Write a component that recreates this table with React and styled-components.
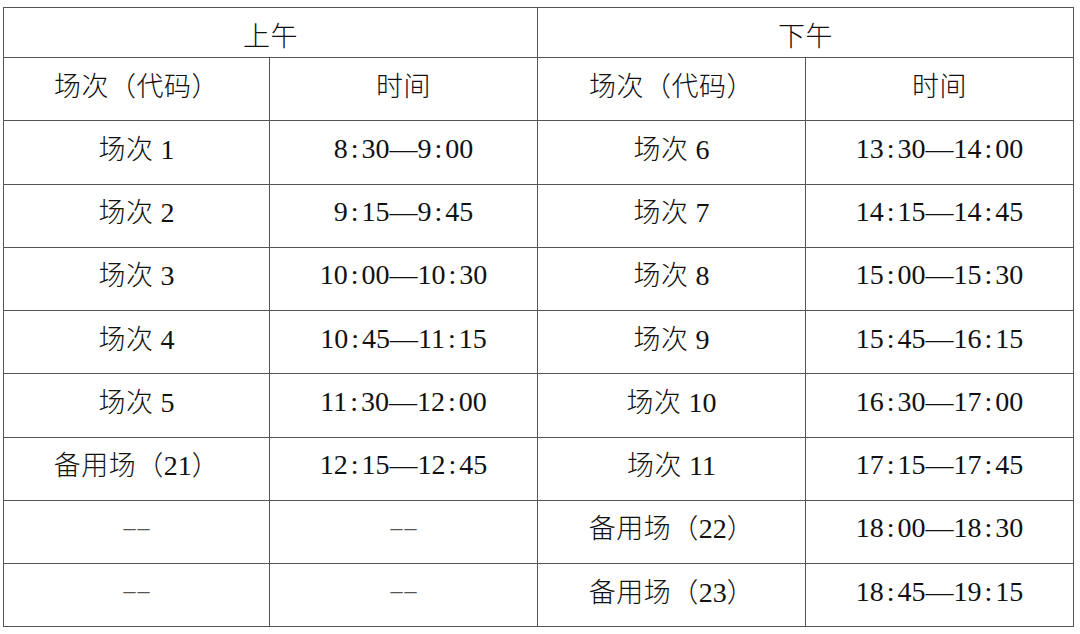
import React from 'react'
import styled, { createGlobalStyle } from 'styled-components'

const GlobalStyle = createGlobalStyle`
  html, body {
    margin: 0;
    padding: 0;
    background: #ffffff;
  }
  body {
    font-family: 'Liberation Serif', 'Noto Sans CJK SC', serif;
    color: #111111;
  }
`

const Page = styled.div`
  padding: 7px 0 0 3px;
`

const Table = styled.table`
  width: 1070px;
  border-collapse: collapse;
  table-layout: fixed;
  border: 1px solid #8a8a8a;
`

const Cell = styled.td`
  border: 1px solid #555555;
  height: ${p => (p.$head ? 50 : 63.25)}px;
  padding: 0;
  text-align: center;
  vertical-align: middle;
  font-size: 27px;
  line-height: 1;
  padding-top: ${p => (p.$head ? 7 : 0)}px;
  padding-bottom: ${p => (p.$head ? 0 : 7)}px;
  box-sizing: border-box;
`

const Han = styled.span`
  font-family: 'Noto Sans CJK SC', sans-serif;
  font-weight: 300;
  letter-spacing: 0.5px;
`

const Num = styled.span`
  font-family: 'Liberation Serif', serif;
  font-size: 28px;
`

const Colon = styled.span`
  font-family: 'Liberation Serif', serif;
  font-size: 28px;
  margin: 0 3px;
`

const Dash = styled.span`
  font-family: 'Liberation Serif', serif;
  color: #555555;
  font-size: 24px;
  letter-spacing: 2px;
  margin-right: -2px;
  vertical-align: 2px;
`

const Time = ({ from, to }) => {
  const part = t => {
    const [h, m] = t.split(':')
    return (
      <>
        <Num>{h}</Num>
        <Colon>:</Colon>
        <Num>{m}</Num>
      </>
    )
  }
  return (
    <Num>
      {part(from)}
      <Num>—</Num>
      {part(to)}
    </Num>
  )
}

const Session = ({ label, n, paren }) => (
  <>
    <Han>{label}</Han>
    {paren ? (
      <>
        <Han>（</Han>
        <Num>{n}</Num>
        <Han>）</Han>
      </>
    ) : (
      <Num> {n}</Num>
    )}
  </>
)

const rows = [
  [['场次', '1'], ['8:30', '9:00'], ['场次', '6'], ['13:30', '14:00']],
  [['场次', '2'], ['9:15', '9:45'], ['场次', '7'], ['14:15', '14:45']],
  [['场次', '3'], ['10:00', '10:30'], ['场次', '8'], ['15:00', '15:30']],
  [['场次', '4'], ['10:45', '11:15'], ['场次', '9'], ['15:45', '16:15']],
  [['场次', '5'], ['11:30', '12:00'], ['场次', '10'], ['16:30', '17:00']],
  [['备用场', '21', true], ['12:15', '12:45'], ['场次', '11'], ['17:15', '17:45']],
  [null, null, ['备用场', '22', true], ['18:00', '18:30']],
  [null, null, ['备用场', '23', true], ['18:45', '19:15']]
]

const SessionCell = ({ s }) => (
  <Cell>{s ? <Session label={s[0]} n={s[1]} paren={s[2]} /> : <Dash>––</Dash>}</Cell>
)

const TimeCell = ({ t }) => (
  <Cell>{t ? <Time from={t[0]} to={t[1]} /> : <Dash>––</Dash>}</Cell>
)

export default function App () {
  return (
    <Page>
      <GlobalStyle />
      <Table>
        <colgroup>
          <col style={{ width: 266 }} />
          <col style={{ width: 268 }} />
          <col style={{ width: 268 }} />
          <col style={{ width: 268 }} />
        </colgroup>
        <tbody>
          <tr>
            <Cell $head colSpan={2}><Han>上午</Han></Cell>
            <Cell $head colSpan={2}><Han>下午</Han></Cell>
          </tr>
          <tr>
            <Cell><Han>场次（代码）</Han></Cell>
            <Cell><Han>时间</Han></Cell>
            <Cell><Han>场次（代码）</Han></Cell>
            <Cell><Han>时间</Han></Cell>
          </tr>
          {rows.map((r, i) => (
            <tr key={i}>
              <SessionCell s={r[0]} />
              <TimeCell t={r[1]} />
              <SessionCell s={r[2]} />
              <TimeCell t={r[3]} />
            </tr>
          ))}
        </tbody>
      </Table>
    </Page>
  )
}
